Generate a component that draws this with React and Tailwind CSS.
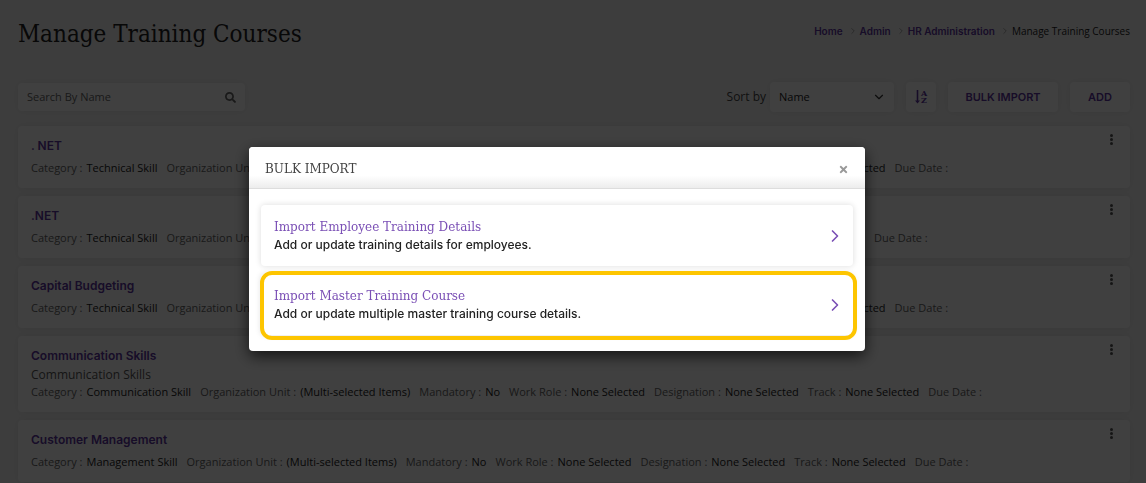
import React, { useState } from 'react';
import { FaSearch, FaTimes } from 'react-icons/fa';
import { ChevronDown, ChevronRight } from 'lucide-react';

const crumbs = ['Home', 'Admin', 'HR Administration'];

const courses = [
  { title: '. NET', category: 'Technical Skill', unit: '(Multi-selected Items)' },
  { title: '.NET', category: 'Technical Skill', unit: '(All Departments)' },
  { title: 'Capital Budgeting', category: 'Technical Skill', unit: '(Multi-selected Items)' },
  { title: 'Communication Skills', description: 'Communication Skills', category: 'Communication Skill', unit: '(Multi-selected Items)' },
  { title: 'Customer Management', category: 'Management Skill', unit: '(Multi-selected Items)' },
];

const importOptions = [
  { title: 'Import Employee Training Details', text: 'Add or update training details for employees.' },
  { title: 'Import Master Training Course', text: 'Add or update multiple master training course details.', highlighted: true },
];

function Meta({ label, value }) {
  return (
    <div className="flex gap-1">
      <dt className="text-[#666]">{label} :</dt>
      <dd className="font-medium text-[#222]">{value}</dd>
    </div>
  );
}

function CourseCard({ course }) {
  return (
    <article className="flex items-start justify-between rounded bg-white p-3 pl-[13px] shadow-[0_0_8px_rgba(0,0,0,0.08)]">
      <div>
        <h2 className="font-[Inter,sans-serif] text-[12px] leading-4 font-semibold text-[#5e35a0]">{course.title}</h2>
        {course.description && <p className="mt-[3px] text-[12px] leading-4 text-[#555]">{course.description}</p>}
        <dl className={`flex gap-[9px] whitespace-nowrap text-[11px] leading-4 ${course.description ? 'mt-px' : 'mt-[6px]'}`}>
          <Meta label="Category" value={course.category} />
          <Meta label="Organization Unit" value={course.unit} />
          <Meta label="Mandatory" value="No" />
          <Meta label="Work Role" value="None Selected" />
          <Meta label="Designation" value="None Selected" />
          <Meta label="Track" value="None Selected" />
          <Meta label="Due Date" value="" />
        </dl>
      </div>
      <button aria-label="More actions" className="-mt-1 flex h-[11px] w-[13px] flex-col items-center justify-between text-[#555]">
        <span className="size-[3px] rounded-full bg-current" />
        <span className="size-[3px] rounded-full bg-current" />
        <span className="size-[3px] rounded-full bg-current" />
      </button>
    </article>
  );
}

function ImportDialog({ onClose }) {
  return (
    <div className="fixed inset-0 flex items-start justify-center bg-black/75 pt-[147px] pr-8">
      <section role="dialog" aria-label="Bulk import" className="w-[616px] max-w-full rounded bg-white shadow-[0_5px_15px_rgba(0,0,0,0.7)]">
        <header className="flex h-[42px] items-center justify-between rounded-t border-b border-[#ddd] bg-linear-to-b from-white from-70% to-[#ececec] px-4 pt-[3px]">
          <h2 className="font-['DejaVu_Serif',serif] text-[12px] text-[#444]">BULK IMPORT</h2>
          <button aria-label="Close" onClick={onClose} className="flex size-[11px] items-center justify-center text-[#999]">
            <FaTimes size={11} />
          </button>
        </header>
        <div className="flex flex-col gap-2 px-3 py-4">
          {importOptions.map(option => (
            <button key={option.title} className="relative flex h-[61px] items-center justify-between rounded bg-white pr-2 pl-[13px] text-left shadow-[0_0_6px_rgba(0,0,0,0.14)]">
              <span>
                <span className="block font-['DejaVu_Serif',serif] text-[12px] leading-[18px] text-[#7a4fb5]">{option.title}</span>
                <span className="block font-[Inter,sans-serif] text-[12px] leading-[18px] font-medium text-[#222]">{option.text}</span>
              </span>
              <ChevronRight size={20} className="text-[#7a4fb5]" />
              {option.highlighted && <span className="absolute -top-[3px] -right-1 -bottom-[5px] -left-px rounded-xl border-4 border-[#fdc500]" />}
            </button>
          ))}
        </div>
      </section>
    </div>
  );
}

export default function App() {
  const [open, setOpen] = useState(true);
  const [sort, setSort] = useState('Name');

  return (
    <div className="h-screen overflow-hidden bg-[#f4f4f4] pr-4 pl-[18px] font-['Open_Sans',sans-serif] text-[#222]">
      <header className="flex items-start justify-between pt-4">
        <h1 className="font-['DejaVu_Serif_Condensed','DejaVu_Serif',serif] text-[24px] leading-9">Manage Training Courses</h1>
        <nav aria-label="Breadcrumb" className="flex items-center text-[10px] leading-[30px]">
          {crumbs.map(crumb => (
            <React.Fragment key={crumb}>
              <a href="#" className="font-[Inter,sans-serif] font-semibold text-[#5e35a0]">{crumb}</a>
              <ChevronRight size={10} className="mr-[2px] ml-[5px] text-[#999]" />
            </React.Fragment>
          ))}
          <span>Manage Training Courses</span>
        </nav>
      </header>

      <div className="mt-[30px] flex items-center justify-between">
        <label className="flex h-7 w-[227px] items-center justify-between rounded bg-white px-[9px] shadow-[0_0_8px_rgba(0,0,0,0.08)]">
          <input aria-label="Search by name" placeholder="Search By Name" className="min-w-0 flex-1 text-[11px] outline-none placeholder:text-[#666]" />
          <FaSearch size={11} className="text-[#666]" />
        </label>
        <div className="flex items-center">
          <label htmlFor="sort" className="mr-1 text-[12px] text-[#444]">Sort by</label>
          <div className="relative">
            <select id="sort" value={sort} onChange={e => setSort(e.target.value)} className="h-[30px] w-[124px] appearance-none rounded bg-white pl-[9px] text-[11px] shadow-[0_0_8px_rgba(0,0,0,0.08)]">
              <option>Name</option>
              <option>Category</option>
            </select>
            <ChevronDown size={14} className="pointer-events-none absolute top-2 right-2 text-[#333]" />
          </div>
          <button aria-label="Sort ascending" className="ml-3 flex h-[30px] w-[30px] items-center justify-center gap-px rounded bg-white text-[#5e35a0] shadow-[0_0_8px_rgba(0,0,0,0.08)]">
            <svg width="5" height="14" viewBox="0 0 5 14" fill="currentColor">
              <path d="M1.7 0h1.6v10.5H5L2.5 13.5 0 10.5h1.7z" />
            </svg>
            <span className="flex flex-col font-['DejaVu_Serif',serif] text-[8px] leading-[7px] font-bold">
              <span>A</span>
              <span>Z</span>
            </span>
          </button>
          <button onClick={() => setOpen(true)} className="ml-3 h-[30px] w-[110px] rounded bg-white font-[Inter,sans-serif] text-[11px] font-semibold text-[#5e35a0] shadow-[0_0_8px_rgba(0,0,0,0.08)]">BULK IMPORT</button>
          <button className="ml-3 h-[30px] w-[60px] rounded bg-white font-[Inter,sans-serif] text-[11px] font-semibold text-[#5e35a0] shadow-[0_0_8px_rgba(0,0,0,0.08)]">ADD</button>
        </div>
      </div>

      <main className="mt-[14px] flex flex-col gap-2">
        {courses.map(course => <CourseCard key={course.title} course={course} />)}
      </main>

      {open && <ImportDialog onClose={() => setOpen(false)} />}
    </div>
  );
}
